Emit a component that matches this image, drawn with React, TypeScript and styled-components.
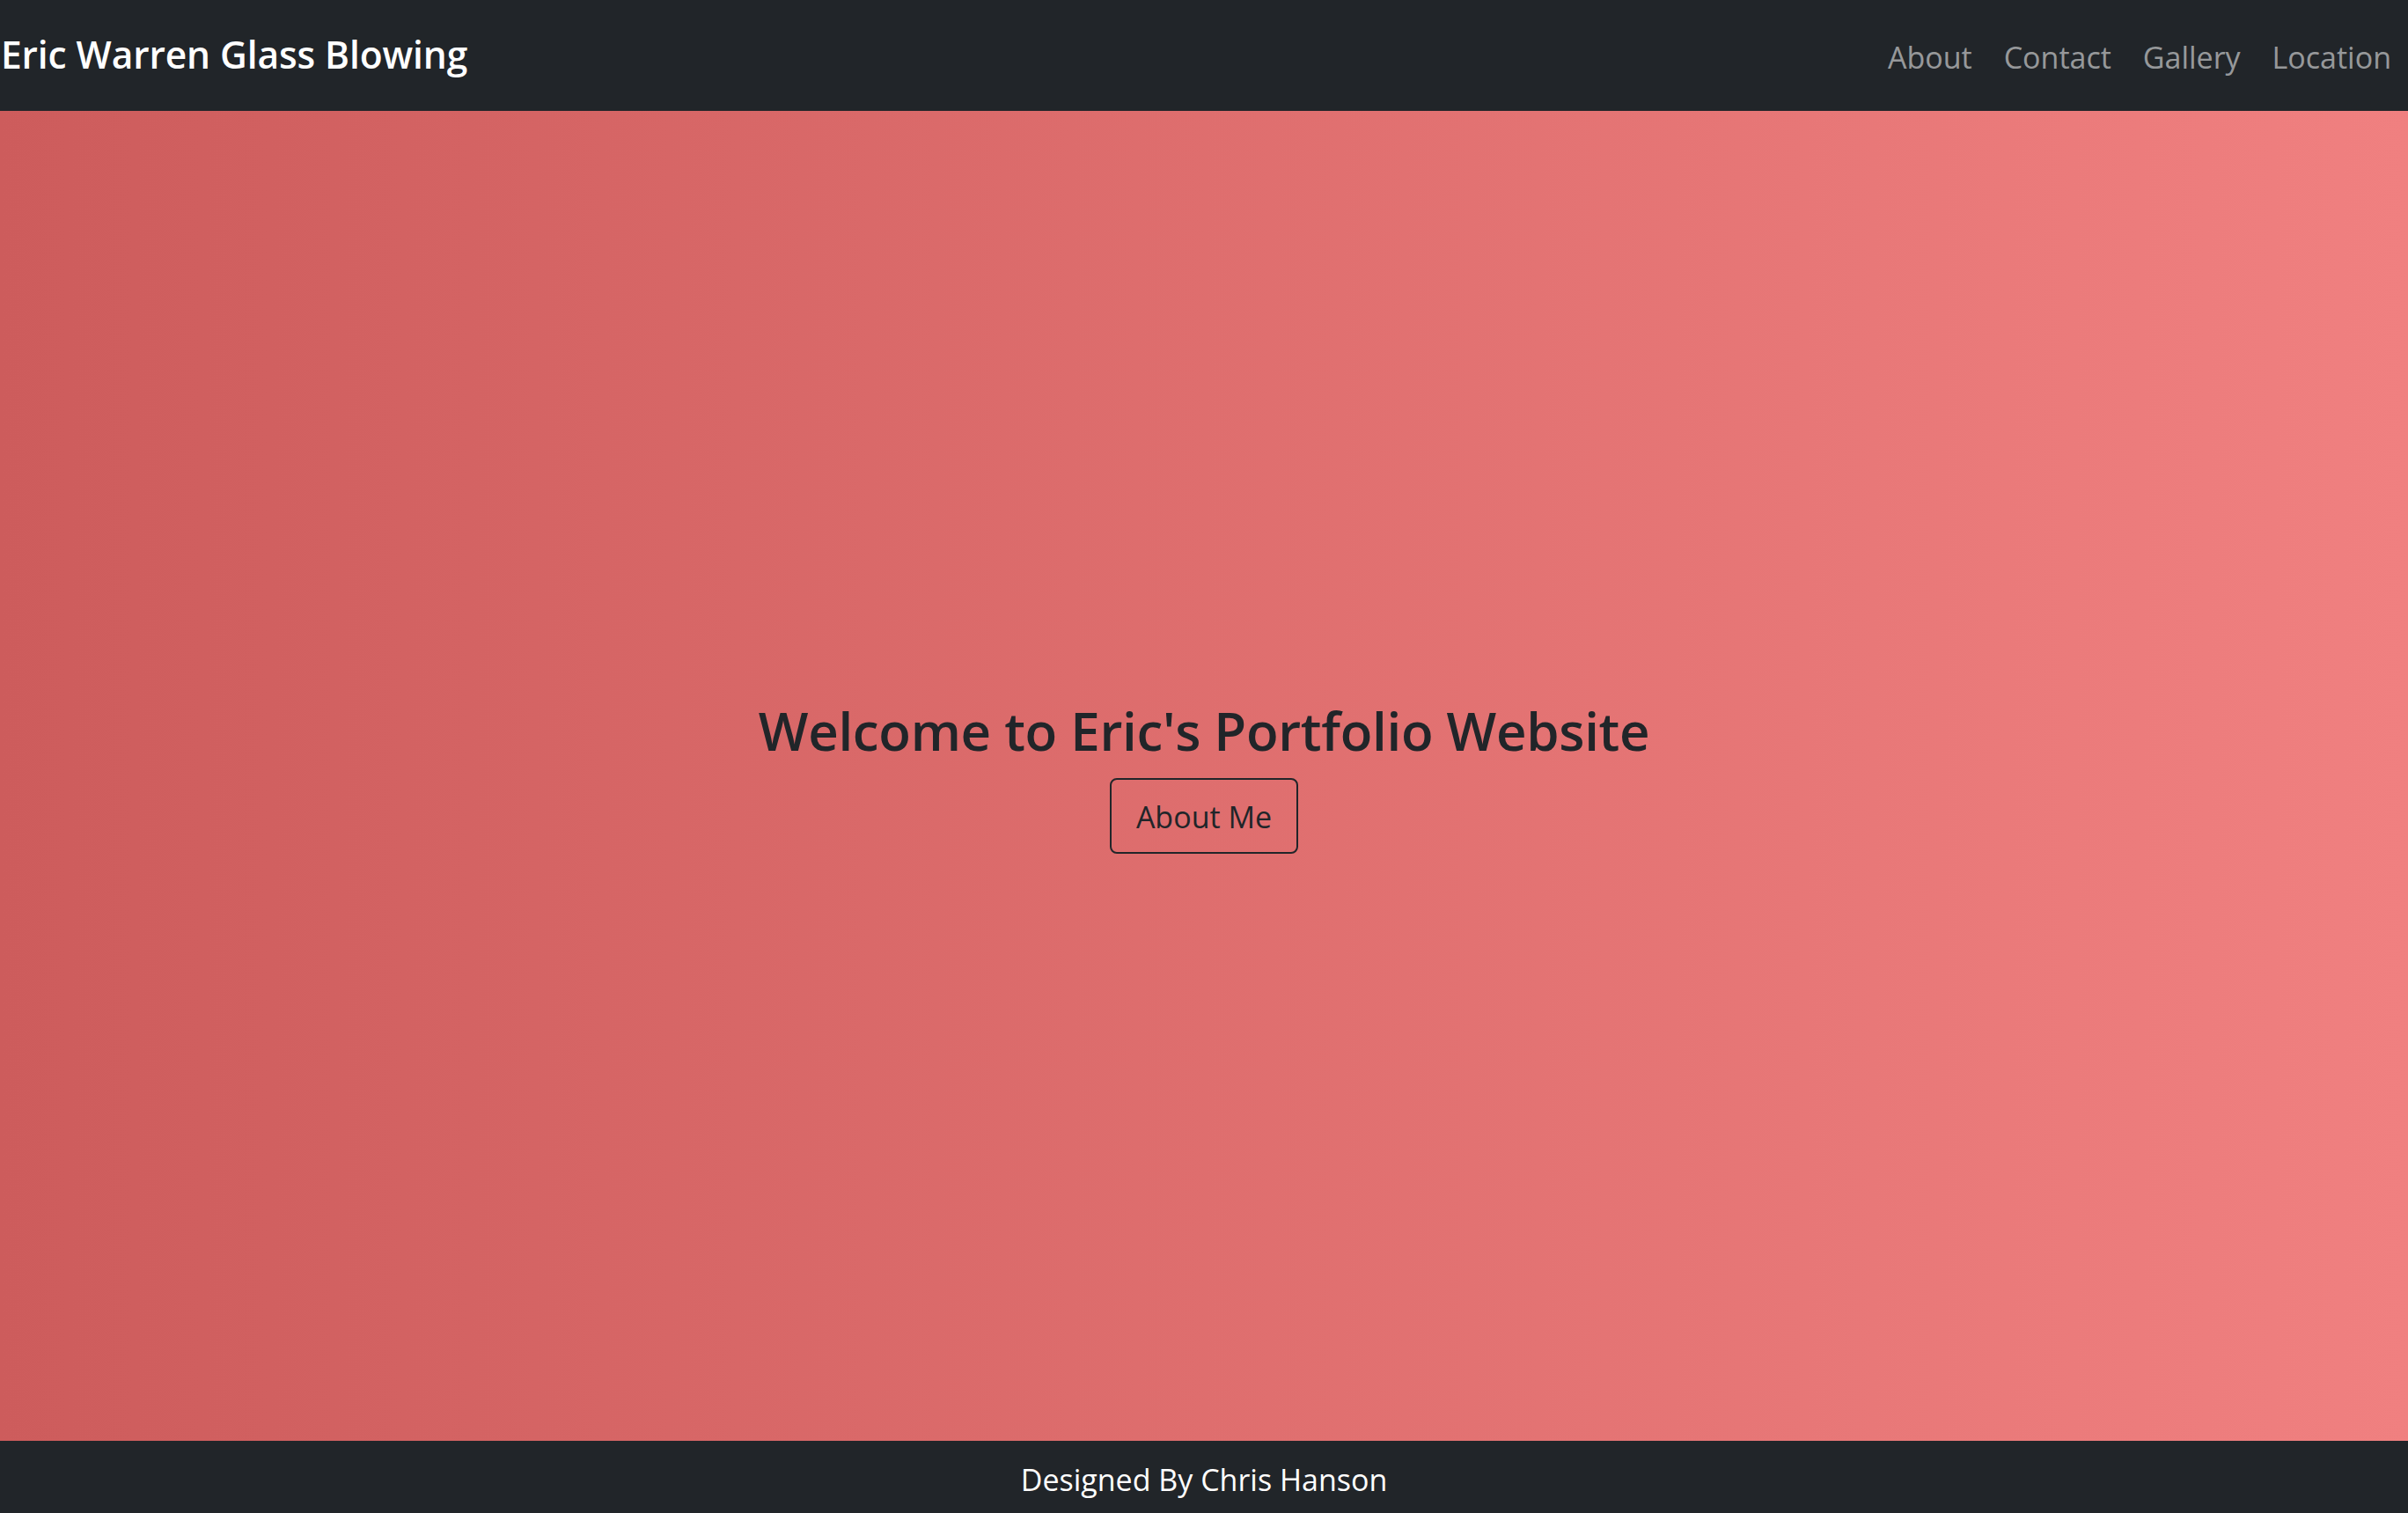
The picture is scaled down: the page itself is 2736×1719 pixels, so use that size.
import React from "react";
import styled, { createGlobalStyle } from "styled-components";

const GlobalStyle = createGlobalStyle`
  html, body {
    margin: 0;
    padding: 0;
    height: 100%;
  }
  body {
    font-family: "Open Sans", "Noto Sans", "Liberation Sans", sans-serif;
    color: #212529;
  }
  #root {
    min-height: 100vh;
  }
  * { box-sizing: border-box; }
`;

const Page = styled.div`
  display: flex;
  flex-direction: column;
  min-height: 100vh;
`;

const NavBar = styled.nav`
  height: 126px;
  flex: 0 0 126px;
  background: #212529;
  display: flex;
  align-items: center;
  justify-content: space-between;
`;

const Brand = styled.a`
  color: #ffffff;
  font-size: 42.5px;
  font-weight: 600;
  text-decoration: none;
  padding: 0 0 3px 1px;
  line-height: 1.5;
  letter-spacing: -0.1px;
`;

const NavList = styled.ul`
  list-style: none;
  margin: 0;
  padding: 0 1px 0 0;
  display: flex;
  align-items: center;
`;

const NavLink = styled.a`
  display: block;
  color: rgba(255, 255, 255, 0.55);
  font-size: 34px;
  line-height: 1.5;
  padding: 4px 18px 0 18px;
  text-decoration: none;
`;

const Hero = styled.main`
  flex: 1;
  background: linear-gradient(to right, #cd5c5c, #f08080);
  display: flex;
  flex-direction: column;
  align-items: center;
  justify-content: center;
`;

const Title = styled.h1`
  margin: 0 0 18px 0;
  font-size: 60px;
  font-weight: 600;
  line-height: 1.2;
  color: #212529;
  letter-spacing: -0.3px;
`;

const OutlineButton = styled.button`
  font-family: inherit;
  font-size: 34px;
  line-height: 1.5;
  color: #212529;
  background: transparent;
  border: 2px solid #212529;
  border-radius: 8px;
  padding: 17px 28px 14px 28px;
  cursor: pointer;
`;

const Footer = styled.footer`
  flex: 0 0 82px;
  height: 82px;
  background: #212529;
  color: #ffffff;
  display: flex;
  align-items: center;
  justify-content: center;
  font-size: 34px;
  padding-top: 5px;
`;

const links = ["About", "Contact", "Gallery", "Location"];

export default function App() {
  return (
    <>
      <GlobalStyle />
      <Page>
        <NavBar>
          <Brand href="#">Eric Warren Glass Blowing</Brand>
          <NavList>
            {links.map((l) => (
              <li key={l}>
                <NavLink href="#">{l}</NavLink>
              </li>
            ))}
          </NavList>
        </NavBar>
        <Hero>
          <Title>Welcome to Eric's Portfolio Website</Title>
          <OutlineButton>About Me</OutlineButton>
        </Hero>
        <Footer>Designed By Chris Hanson</Footer>
      </Page>
    </>
  );
}
